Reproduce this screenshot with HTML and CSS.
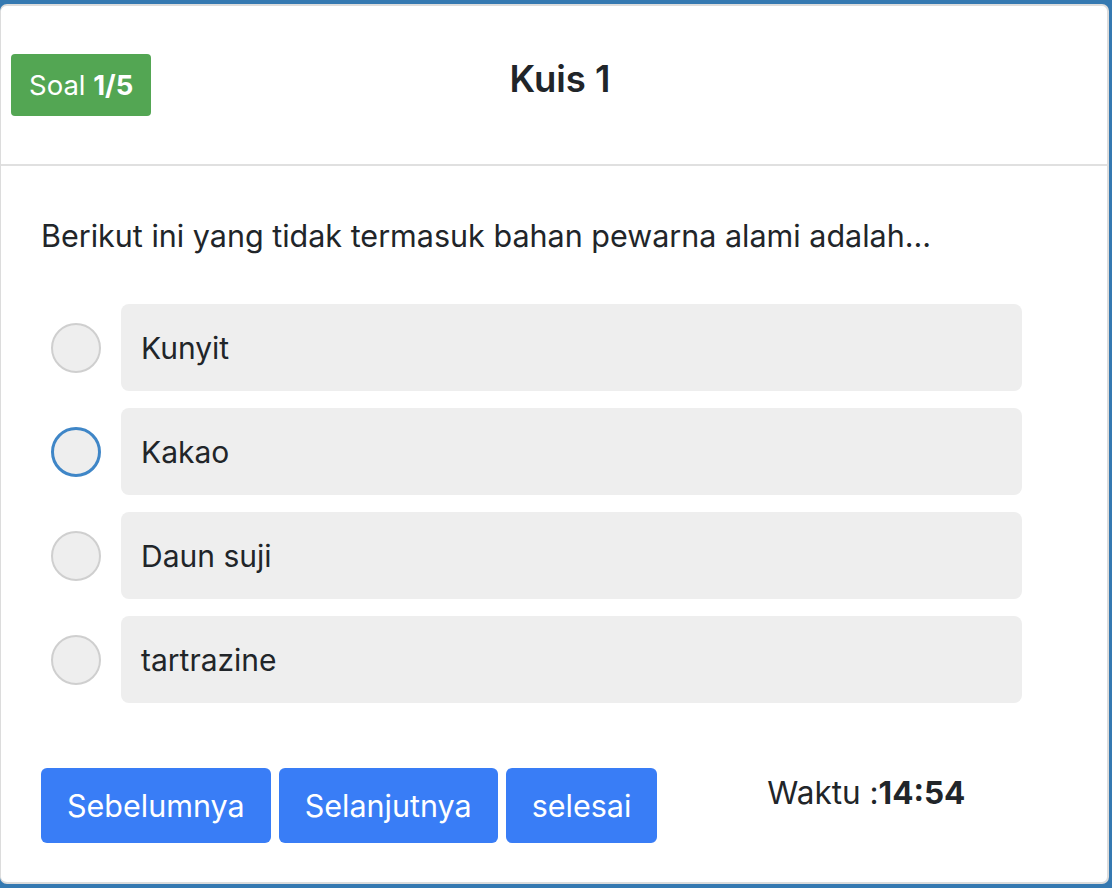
FILE: index.html
```html
<!DOCTYPE html>
<html lang="id">
<head>
<meta charset="utf-8">
<title>Kuis 1</title>
<link rel="stylesheet" href="styles.css">
</head>
<body>
<div class="card">
  <div class="card-header">
    <span class="badge">Soal <b>1/5</b></span>
    <h3 class="title">Kuis 1</h3>
    <span class="spacer"></span>
  </div>
  <div class="card-body">
    <p class="question">Berikut ini yang tidak termasuk bahan pewarna alami adalah...</p>
    <div class="options">
      <label class="option"><span class="radio"></span><span class="opt-text">Kunyit</span></label>
      <label class="option"><span class="radio focused"></span><span class="opt-text">Kakao</span></label>
      <label class="option"><span class="radio"></span><span class="opt-text">Daun suji</span></label>
      <label class="option"><span class="radio"></span><span class="opt-text">tartrazine</span></label>
    </div>
    <div class="footer">
      <button class="btn">Sebelumnya</button>
      <button class="btn">Selanjutnya</button>
      <button class="btn">selesai</button>
      <div class="timer">Waktu :<b>14:54</b></div>
    </div>
  </div>
</div>
</body>
</html>
```
FILE: styles.css
```css
html, body {
  margin: 0;
  padding: 0;
  height: 100%;
}
body {
  background: #3579b1;
  font-family: Inter, "Noto Sans", sans-serif;
  color: #212529;
  padding: 4px 3px 4px 0;
  box-sizing: border-box;
}
.card {
  background: #fff;
  border: 2px solid #dcdcdc;
  border-left-width: 1px;
  border-radius: 7px;
  height: 100%;
  box-sizing: border-box;
}
.card-header {
  height: 160px;
  box-sizing: border-box;
  border-bottom: 2px solid #e0e0e0;
  display: grid;
  grid-template-columns: 1fr auto 1fr;
  align-items: start;
  padding: 48px 10px 0;
}
.badge {
  justify-self: start;
  background: #53a653;
  color: #fff;
  font-size: 27.5px;
  height: 62px;
  line-height: 62px;
  padding: 0 18px;
  border-radius: 4px;
}
.badge b { font-weight: 700; }
.title {
  margin: 0 0 0 12px;
  font-size: 36.5px;
  font-weight: 600;
  line-height: 50px;
}
.card-body {
  padding: 50px 40px 0;
}
.question {
  margin: 0 0 48px;
  font-size: 30.5px;
  line-height: 40px;
}
.options {
  display: flex;
  flex-direction: column;
  gap: 17px;
}
.option {
  display: flex;
  align-items: center;
  gap: 20px;
  padding-left: 10px;
}
.radio {
  width: 50px;
  height: 50px;
  border-radius: 50%;
  border: 2px solid #cfcfcf;
  background: #eee;
  box-sizing: border-box;
  flex: none;
}
.radio.focused {
  border: 3px solid #3f86c7;
}
.opt-text {
  width: 901px;
  height: 87px;
  background: #eee;
  border-radius: 8px;
  display: flex;
  align-items: center;
  padding-left: 20px;
  box-sizing: border-box;
  font-size: 30px;
}
.footer {
  display: flex;
  align-items: flex-start;
  gap: 8px;
  margin-top: 65px;
}
.btn {
  font-family: inherit;
  font-size: 30.5px;
  color: #fff;
  background: #397df6;
  border: none;
  border-radius: 6px;
  height: 75px;
  padding: 0 26px;
}
.timer {
  margin-left: 102px;
  margin-top: 6px;
  font-size: 31.5px;
  line-height: 38px;
}
.timer b { font-weight: 700; }
```
